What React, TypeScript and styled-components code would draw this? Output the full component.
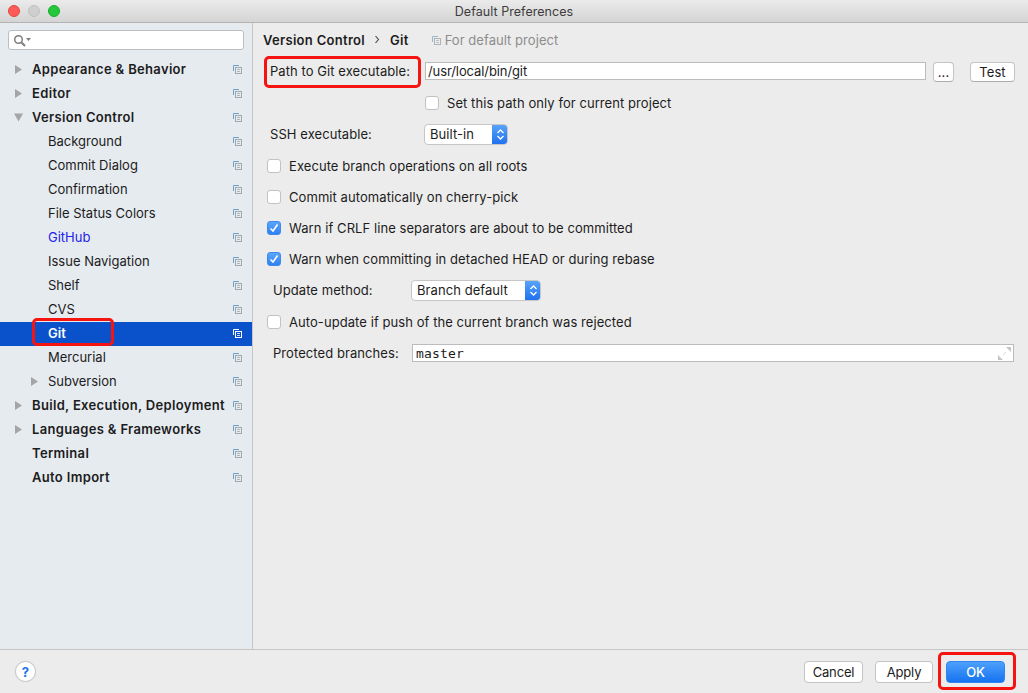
import React from "react";
import styled, { createGlobalStyle } from "styled-components";

const Global = createGlobalStyle`
  html, body { margin: 0; padding: 0; height: 100%; background: #ececec; }
  body { font-family: Inter, "Liberation Sans", sans-serif; font-size: 13px; color: #1c1c1c; overflow: hidden; }
  * { box-sizing: border-box; }
`;

const Window = styled.div`
  width: 1028px; height: 693px; display: flex; flex-direction: column; background: #ececec;
`;
const TitleBar = styled.div`
  height: 23px; flex: none; display: flex; align-items: center; position: relative; padding-left: 8px; gap: 8px;
  background: linear-gradient(#ebebeb, #d4d4d4); border-bottom: 1px solid #b4b4b4;
`;
const Light = styled.span<{ $c: string; $b: string }>`
  width: 12px; height: 12px; border-radius: 50%; background: ${p => p.$c}; border: 1px solid ${p => p.$b};
`;
const Title = styled.div`
  position: absolute; left: 0; right: 0; top: 0; height: 22px; line-height: 23px; text-align: center; font-size: 12.5px; color: #3c3c3c; letter-spacing: 0.05px;
`;
const Body = styled.div`
  flex: 1; display: flex; min-height: 0;
`;
const Sidebar = styled.div`
  width: 253px; flex: none; background: #e6ebf0; border-right: 1px solid #c6c6c6; padding-top: 7px; display: flex; flex-direction: column;
`;
const SearchBox = styled.div`
  margin: 0 8px 7px 8px; width: 236px; height: 20px; flex: none; background: #fff; border: 1px solid #bdbdbd; border-radius: 3px; display: flex; align-items: center; padding-left: 4px;
`;
const TreeRow = styled.div<{ $indent: number; $bold?: boolean; $sel?: boolean; $link?: boolean }>`
  height: 24px; flex: none; display: flex; align-items: center; position: relative;
  padding-left: ${p => p.$indent}px; padding-right: 10px;
  ${p => p.$sel ? `
    background: #0a52cc; background-clip: padding-box;
    border-top: 1px solid transparent; padding-bottom: 1px;
    box-shadow: 0 1px 0 #0a52cc;
  ` : ""}
  color: ${p => (p.$sel ? "#fff" : p.$link ? "#2323e6" : "#1c1c1c")};
  font-weight: ${p => (p.$bold || p.$sel ? 600 : 400)};
  letter-spacing: ${p => (p.$bold ? "0.33px" : "0")};
  white-space: nowrap;
`;
const TreeLabel = styled.span`
  flex: 1;
`;
const ArrowSlot = styled.span<{ $left: number }>`
  position: absolute; left: ${p => p.$left}px; top: 8px; width: 9px; height: 9px; display: block; line-height: 0;
`;
const CopySvg = styled.svg`
  flex: none; margin-top: 1px;
`;
const Main = styled.div`
  flex: 1; display: flex; flex-direction: column; min-width: 0; padding: 0 13px 0 14px;
`;
const Crumbs = styled.div`
  height: 37px; flex: none; display: flex; align-items: center; padding-bottom: 3.4px; margin-left: -4px;
  font-weight: 600; letter-spacing: 0.3px; color: #1c1c1c; white-space: nowrap;
`;
const CrumbSep = styled.span`
  width: 25px; text-align: center; display: flex; justify-content: center; 
`;
const CrumbNote = styled.span`
  font-weight: 400; color: #8d8d8d; margin-left: 23px; display: flex; align-items: center; gap: 4px; letter-spacing: 0.05px;
`;
const Form = styled.div`
  display: flex; flex-direction: column;
`;
const Row = styled.div<{ $pad?: number; $mt?: number }>`
  height: 22px; flex: none; display: flex; align-items: center; margin-top: ${p => p.$mt ?? 9}px;
  padding-left: ${p => p.$pad ?? 0}px; white-space: nowrap; letter-spacing: 0.07px;
`;
const FieldLabel = styled.span<{ $w: number }>`
  width: ${p => p.$w}px; flex: none; position: relative;
`;
const TextField = styled.div<{ $mono?: boolean }>`
  height: 18px; background: #fff; border: 1px solid #bcbcbc; display: flex; align-items: center; padding-left: 2px; flex: 1; position: relative; letter-spacing: -0.1px;
  ${p => p.$mono ? `font-family: "DejaVu Sans Mono", monospace; font-size: 13px; letter-spacing: .17px; padding-left: 3px; margin-right: 1px;` : ""}
`;
const Btn = styled.div<{ $w: number; $ml?: number }>`
  width: ${p => p.$w}px; margin-left: ${p => p.$ml ?? 0}px; margin-top: 1px; height: 20px; flex: none; background: #fff; border: 1px solid #c4c4c4; border-bottom-color: #adadad; border-radius: 4px; display: flex; align-items: center; justify-content: center;
`;
const Check = styled.span<{ $on?: boolean }>`
  width: 14px; height: 14px; border-radius: 3px; flex: none; margin-right: 8px; display: flex; align-items: center; justify-content: center;
  background: ${p => (p.$on ? "linear-gradient(#5aa6fb,#2f80f1)" : "#fff")};
  border: 1px solid ${p => (p.$on ? "#3b8af0" : "#c2c2c2")};
`;
const Select = styled.div<{ $w: number }>`
  width: ${p => p.$w}px; height: 21px; margin-top: 1px; flex: none; background: #fff; border: 1px solid #c6c6c6; border-radius: 4px; display: flex; align-items: center; justify-content: space-between; padding: 0 0 1px 5px; overflow: hidden;
`;
const SelectCap = styled.span`
  width: 16px; height: 21px; margin: 0 -1px -1px 0; background: linear-gradient(#5aa6fb,#1d6fee); display: flex; align-items: center; justify-content: center;
`;
const Spacer = styled.div`
  flex: 1;
`;
const Footer = styled.div`
  height: 44px; flex: none; background: #ececec; border-top: 1px solid #c6c6c6; display: flex; align-items: center; padding: 0 23px 0 15px; position: relative;
`;
const Help = styled.div`
  width: 21px; height: 21px; border-radius: 50%; background: #fff; border: 1px solid #c8c8c8; box-shadow: 0 0 1px #d0d0d0; color: #1a73e8; display: flex; align-items: center; justify-content: center; font-weight: 700; font-size: 13px;
`;
const FootBtn = styled.div<{ $w: number; $ml: number; $primary?: boolean }>`
  width: ${p => p.$w}px; margin-left: ${p => p.$ml}px; height: 22px; border-radius: 4px; position: relative; display: flex; align-items: center; justify-content: center; letter-spacing: -0.15px;
  background: ${p => (p.$primary ? "linear-gradient(#4da0fb,#1673f0)" : "#fff")};
  color: ${p => (p.$primary ? "#fff" : "#1c1c1c")};
  font-weight: ${p => (p.$primary ? 500 : 400)};
  border: 1px solid ${p => (p.$primary ? "#2f83f2" : "#c4c4c4")};
`;
const RedBox = styled.span<{ $l: number; $t: number; $w: number; $h: number }>`
  position: absolute; left: ${p => p.$l}px; top: ${p => p.$t}px; width: ${p => p.$w}px; height: ${p => p.$h}px;
  border: 3px solid #f5140f; border-radius: 5px; pointer-events: none;
`;

const CopyIcon = ({ back = "#6ba2c4", front = "#9ea8ad" }: { back?: string; front?: string }) => (
  <CopySvg width="9" height="9" viewBox="0 0 9 9" fill="none" strokeWidth="1">
    <path d="M.5 6V.5H6" stroke={back} />
    <rect x="2.5" y="2.5" width="6" height="6" stroke={front} />
    <path d="M4 4.5h3M4 6.5h3" stroke={front} opacity=".8" />
  </CopySvg>
);
const RightArrow = () => (
  <svg width="9" height="9" viewBox="0 0 9 9"><path d="M1 0l7 4.5L1 9z" fill="#a5a5a5" /></svg>
);
const DownArrow = () => (
  <svg width="9" height="9" viewBox="0 0 9 9"><path d="M0 .5h9L4.5 8.5z" fill="#a5a5a5" /></svg>
);
const SearchIcon = () => (
  <svg width="20" height="13" viewBox="0 0 20 13" fill="none">
    <circle cx="5.5" cy="5.5" r="3.8" stroke="#7d7d7d" strokeWidth="1.5" />
    <path d="M8.5 8.5l3.5 3.5" stroke="#7d7d7d" strokeWidth="2" />
    <path d="M13 4h5l-2.5 3z" fill="#7d7d7d" />
  </svg>
);
const Tick = () => (
  <svg width="10" height="10" viewBox="0 0 10 10" fill="none"><path d="M1.5 5.5L4 8l4.5-6.5" stroke="#fff" strokeWidth="1.6" /></svg>
);
const Updown = () => (
  <svg width="9" height="13" viewBox="0 0 9 13" fill="none" stroke="#fff" strokeWidth="1.3"><path d="M1.5 5l3-3 3 3M1.5 8l3 3 3-3" /></svg>
);
const Chevron = () => (
  <svg width="6" height="9" viewBox="0 0 6 9" fill="none" stroke="#444" strokeWidth="1.1"><path d="M1.5 1l3 3.5-3 3.5" /></svg>
);
const ExpandSvg = styled.svg`
  position: absolute; right: 2px; top: 2px;
`;
const Expand = () => (
  <ExpandSvg width="13" height="13" viewBox="0 0 13 13">
    <path d="M8 0h5v5zM0 8l5 5H0z" fill="#c0c5c8" />
    <path d="M5 8l3-3" stroke="#d4d8da" strokeWidth="1" />
  </ExpandSvg>
);

type Item = { label: string; indent: number; bold?: boolean; arrow?: "r" | "d"; arrowAt?: number; sel?: boolean; link?: boolean };
const items: Item[] = [
  { label: "Appearance & Behavior", indent: 32, bold: true, arrow: "r", arrowAt: 14 },
  { label: "Editor", indent: 32, bold: true, arrow: "r", arrowAt: 14 },
  { label: "Version Control", indent: 32, bold: true, arrow: "d", arrowAt: 14 },
  { label: "Background", indent: 48 },
  { label: "Commit Dialog", indent: 48 },
  { label: "Confirmation", indent: 48 },
  { label: "File Status Colors", indent: 48 },
  { label: "GitHub", indent: 48, link: true },
  { label: "Issue Navigation", indent: 48 },
  { label: "Shelf", indent: 48 },
  { label: "CVS", indent: 48 },
  { label: "Git", indent: 48, sel: true },
  { label: "Mercurial", indent: 48 },
  { label: "Subversion", indent: 48, arrow: "r", arrowAt: 30 },
  { label: "Build, Execution, Deployment", indent: 32, bold: true, arrow: "r", arrowAt: 14 },
  { label: "Languages & Frameworks", indent: 32, bold: true, arrow: "r", arrowAt: 14 },
  { label: "Terminal", indent: 32, bold: true },
  { label: "Auto Import", indent: 32, bold: true },
];

export default function App() {
  return (
    <Window>
      <Global />
      <TitleBar>
        <Light $c="#fc5b57" $b="#e2463f" />
        <Light $c="#cfcfcf" $b="#c0c0c0" />
        <Light $c="#25c73b" $b="#1aad2c" />
        <Title>Default Preferences</Title>
      </TitleBar>
      <Body>
        <Sidebar>
          <SearchBox><SearchIcon /></SearchBox>
          {items.map(it => (
            <TreeRow key={it.label} $indent={it.indent} $bold={it.bold} $sel={it.sel} $link={it.link}>
              {it.arrow && <ArrowSlot $left={it.arrowAt ?? 14}>{it.arrow === "r" ? <RightArrow /> : <DownArrow />}</ArrowSlot>}
              <TreeLabel>{it.label}</TreeLabel>
              {it.sel ? <CopyIcon back="#ffffff" front="#ffffff" /> : <CopyIcon />}
              {it.sel && <RedBox $l={32} $t={-4} $w={82} $h={28} />}
            </TreeRow>
          ))}
        </Sidebar>
        <Main>
          <Crumbs>
            <span>Version Control</span>
            <CrumbSep><Chevron /></CrumbSep>
            <span>Git</span>
            <CrumbNote><CopyIcon back="#9fb6c6" front="#adb4b8" /> For default project</CrumbNote>
          </Crumbs>
          <Form>
            <Row $pad={3} $mt={0}>
              <FieldLabel $w={155}>Path to Git executable:<RedBox $l={-6} $t={-7} $w={157} $h={32} /></FieldLabel>
              <TextField>/usr/local/bin/git</TextField>
              <Btn $w={21} $ml={7}>...</Btn>
              <Btn $w={45} $ml={16}>Test</Btn>
            </Row>
            <Row $pad={158} $mt={10}><Check />Set this path only for current project</Row>
            <Row $pad={3}>
              <FieldLabel $w={154}>SSH executable:</FieldLabel>
              <Select $w={84}>Built-in<SelectCap><Updown /></SelectCap></Select>
            </Row>
            <Row $mt={10}><Check />Execute branch operations on all roots</Row>
            <Row><Check />Commit automatically on cherry-pick</Row>
            <Row><Check $on><Tick /></Check>Warn if CRLF line separators are about to be committed</Row>
            <Row><Check $on><Tick /></Check>Warn when committing in detached HEAD or during rebase</Row>
            <Row $pad={6}>
              <FieldLabel $w={138}>Update method:</FieldLabel>
              <Select $w={130}>Branch default<SelectCap><Updown /></SelectCap></Select>
            </Row>
            <Row $mt={10}><Check />Auto-update if push of the current branch was rejected</Row>
            <Row $pad={6}>
              <FieldLabel $w={139}>Protected branches:</FieldLabel>
              <TextField $mono>master<Expand /></TextField>
            </Row>
          </Form>
          <Spacer />
        </Main>
      </Body>
      <Footer>
        <Help>?</Help>
        <Spacer />
        <FootBtn $w={59} $ml={0}>Cancel</FootBtn>
        <FootBtn $w={58} $ml={12}>Apply</FootBtn>
        <FootBtn $w={59} $ml={13} $primary>OK<RedBox $l={-9} $t={-10} $w={78} $h={38} /></FootBtn>
      </Footer>
    </Window>
  );
}
